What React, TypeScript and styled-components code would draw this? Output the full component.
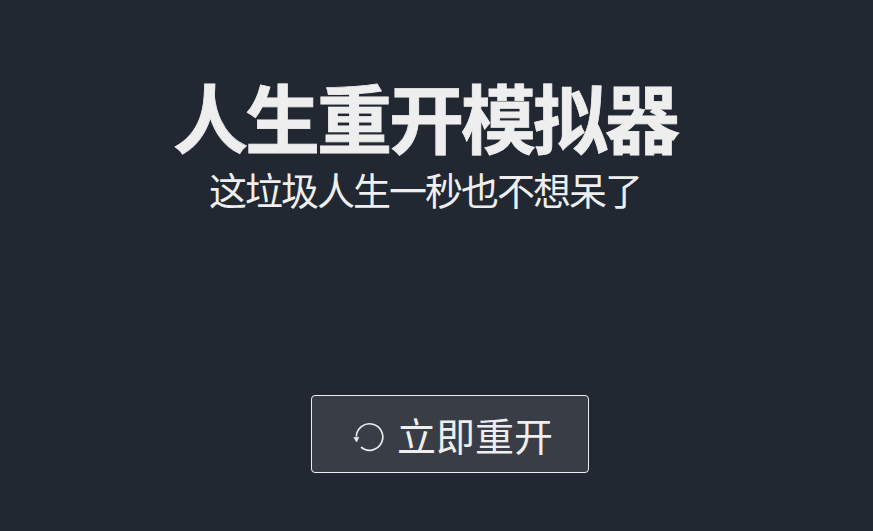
import React from 'react';
import styled, { createGlobalStyle } from 'styled-components';

const GlobalStyle = createGlobalStyle`
  html, body {
    margin: 0;
    height: 100%;
    background: #222831;
  }
  body {
    font-family: "Liberation Sans", "Noto Sans CJK SC", sans-serif;
    color: #eeeeee;
  }
`;

const Page = styled.main`
  width: 873px;
  height: 531px;
  overflow: hidden;
  display: flex;
  flex-direction: column;
  align-items: center;
  padding: 79px 20px 0 0;
  box-sizing: border-box;
`;

const Title = styled.h1`
  margin: 0 0 0 -3px;
  font-size: 75px;
  line-height: 86px;
  letter-spacing: -3px;
  font-weight: 700;
  -webkit-text-stroke: 0.8px #eeeeee;
  color: #eeeeee;
`;

const Subtitle = styled.h2`
  margin: 0 0 0 -3px;
  padding-top: 2px;
  font-size: 38px;
  line-height: 50px;
  letter-spacing: -2px;
  font-weight: 400;
  color: #eeeeee;
`;

const RestartButton = styled.button`
  margin: 178px 0 0 47px;
  width: 278px;
  height: 78px;
  display: flex;
  align-items: center;
  justify-content: center;
  gap: 12px;
  padding: 0 0 0 6px;
  box-sizing: border-box;
  background: #393e46;
  border: 1px solid #eeeeee;
  border-radius: 4px;
  color: #eeeeee;
  font-family: inherit;
  font-size: 39px;
  cursor: pointer;
`;

const IconBox = styled.svg`
  margin-top: 6px;
`;

const RestartIcon = () => (
  <IconBox width="32" height="32" viewBox="0 0 32 32" fill="none" stroke="#eeeeee" strokeWidth="1.7">
    <path d="M3.3 15.5 A13.25 13.25 0 1 1 8 26.2" />
    <path d="M0.8 16.6 L5.8 16.2 L3.6 21 Z" fill="#eeeeee" strokeWidth="0.6" />
  </IconBox>
);

export default function App() {
  return (
    <>
      <GlobalStyle />
      <Page>
        <Title>人生重开模拟器</Title>
        <Subtitle>这垃圾人生一秒也不想呆了</Subtitle>
        <RestartButton>
          <RestartIcon />
          立即重开
        </RestartButton>
      </Page>
    </>
  );
}
